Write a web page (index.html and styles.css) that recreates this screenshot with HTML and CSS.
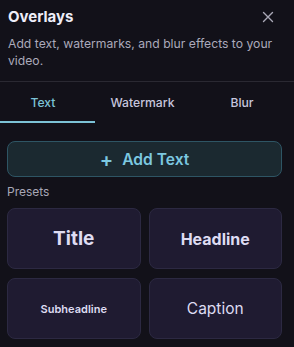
FILE: index.html
```html
<!DOCTYPE html>
<html lang="en">
<head>
<meta charset="utf-8">
<title>Overlays</title>
<link rel="stylesheet" href="styles.css">
</head>
<body>
<div class="panel">
  <header class="head">
    <div class="head-row">
      <h1 class="title">Overlays</h1>
      <button class="close" aria-label="Close">
        <svg width="12" height="12" viewBox="0 0 12 12"><path d="M1.5 1.5 L10.5 10.5 M10.5 1.5 L1.5 10.5" stroke="currentColor" stroke-width="1.4" stroke-linecap="round"/></svg>
      </button>
    </div>
    <p class="desc">Add text, watermarks, and blur effects to your video.</p>
  </header>
  <nav class="tabs">
    <div class="tab active">Text</div>
    <div class="tab">Watermark</div>
    <div class="tab">Blur</div>
  </nav>
  <main class="body">
    <button class="add"><span class="plus">+</span>Add Text</button>
    <div class="label">Presets</div>
    <div class="grid">
      <div class="card"><span class="p-title">Title</span></div>
      <div class="card"><span class="p-headline">Headline</span></div>
      <div class="card"><span class="p-sub">Subheadline</span></div>
      <div class="card"><span class="p-caption">Caption</span></div>
    </div>
  </main>
</div>
</body>
</html>
```
FILE: styles.css
```css
* { box-sizing: border-box; }
html, body { margin: 0; padding: 0; }
body {
  background: #121119;
  font-family: Inter, "Noto Sans", sans-serif;
  color: #e2e1f0;
  width: 294px;
  height: 347px;
  overflow: hidden;
}
.head {
  padding: 7px 12px 0 8px;
  border-bottom: 1px solid #2a2932;
  height: 82px;
}
.head-row {
  display: flex;
  justify-content: space-between;
  align-items: center;
}
.title {
  margin: 0;
  font-size: 15px;
  line-height: 20px;
  font-weight: 700;
  color: #eeeef8;
}
.close {
  background: none;
  border: 0;
  padding: 0;
  margin-right: 8px;
  color: #a9a8b6;
  width: 12px;
  height: 12px;
  display: flex;
}
.desc {
  margin: 8px 0 0 0;
  font-size: 12.2px;
  line-height: 17px;
  color: #abaabb;
}
.tabs {
  display: grid;
  grid-template-columns: repeat(3, 95px);
  column-gap: 4.5px;
}
.tab {
  padding: 12px 9px 9px 0;
  text-align: center;
  font-size: 12.2px;
  line-height: 18px;
  font-weight: 500;
  color: #c7c6de;
  border-bottom: 2px solid transparent;
}
.tab.active {
  color: #7cc2d6;
  border-bottom-color: #7cc2d6;
}
.body {
  padding: 18px 12px 0 7px;
}
.add {
  width: 100%;
  height: 36px;
  display: flex;
  align-items: center;
  justify-content: center;
  background: #1b2930;
  border: 1px solid #2e5564;
  border-radius: 8px;
  color: #7cc8e0;
  font-family: inherit;
  font-size: 15.6px;
  font-weight: 600;
  padding: 0;
}
.plus {
  font-size: 20px;
  font-weight: 600;
  margin-right: 9px;
  position: relative;
  top: 1px;
}
.label {
  margin-top: 7px;
  font-size: 12px;
  line-height: 16px;
  color: #a8a7b6;
}
.grid {
  margin-top: 8px;
  display: grid;
  grid-template-columns: 1fr 1fr;
  gap: 9px 8px;
}
.card {
  height: 61px;
  background: #1f1b31;
  border: 1px solid #2c2942;
  border-radius: 8px;
  display: flex;
  align-items: center;
  justify-content: center;
  color: #dedcf2;
}
.p-title { font-size: 19px; font-weight: 700; }
.p-headline { font-size: 16px; font-weight: 700; }
.p-sub { font-size: 11px; font-weight: 600; }
.p-caption { font-size: 15.5px; font-weight: 400; }
```
